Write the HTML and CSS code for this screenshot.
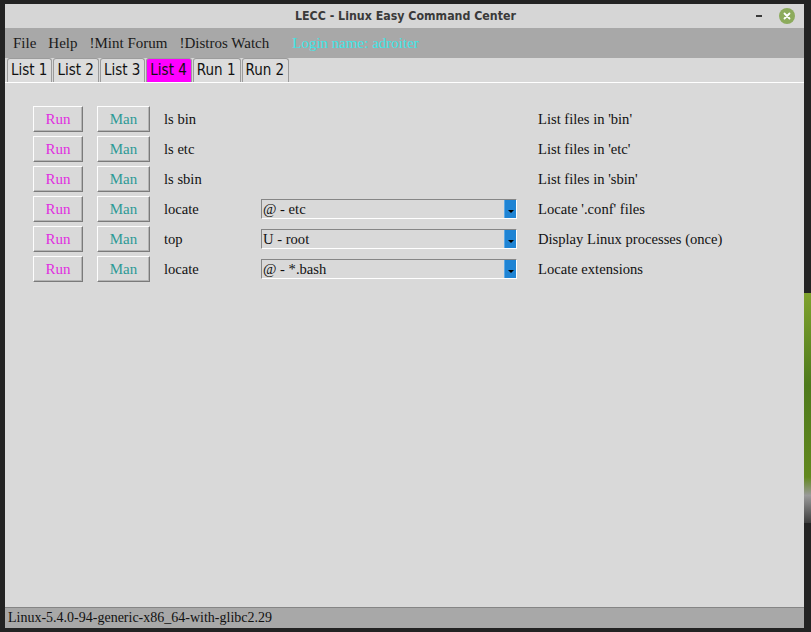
FILE: index.html
```html
<!DOCTYPE html>
<html>
<head>
<meta charset="utf-8">
<title>LECC</title>
<link rel="stylesheet" href="styles.css">
</head>
<body>
<div class="desk-green"></div>
<div class="window">
  <div class="titlebar">
    <span class="title">LECC - Linux Easy Command Center</span>
    <div class="wm-buttons">
      <span class="minimize"></span>
      <span class="close">
        <svg width="16" height="16" viewBox="0 0 16 16"><circle cx="8" cy="8" r="8" fill="#8cab5c"/><path d="M5.5 5.5 L10.5 10.5 M10.5 5.5 L5.5 10.5" stroke="#fff" stroke-width="1.8" stroke-linecap="round"/></svg>
      </span>
    </div>
  </div>
  <div class="menubar">
    <span class="menu-item">File</span>
    <span class="menu-item">Help</span>
    <span class="menu-item">!Mint Forum</span>
    <span class="menu-item">!Distros Watch</span>
    <span class="login">Login name: adroiter</span>
  </div>
  <div class="tabs">
    <span class="tab">List 1</span>
    <span class="tab">List 2</span>
    <span class="tab">List 3</span>
    <span class="tab active">List 4</span>
    <span class="tab">Run 1</span>
    <span class="tab">Run 2</span>
  </div>
  <div class="content">
    <div class="row">
      <button class="btn run">Run</button><button class="btn man">Man</button>
      <span class="cmd">ls bin</span><span class="nocombo"></span>
      <span class="desc">List files in 'bin'</span>
    </div>
    <div class="row">
      <button class="btn run">Run</button><button class="btn man">Man</button>
      <span class="cmd">ls etc</span><span class="nocombo"></span>
      <span class="desc">List files in 'etc'</span>
    </div>
    <div class="row">
      <button class="btn run">Run</button><button class="btn man">Man</button>
      <span class="cmd">ls sbin</span><span class="nocombo"></span>
      <span class="desc">List files in 'sbin'</span>
    </div>
    <div class="row">
      <button class="btn run">Run</button><button class="btn man">Man</button>
      <span class="cmd">locate</span>
      <span class="combo"><span class="combo-text">@ - etc</span><span class="combo-arrow"></span></span>
      <span class="desc">Locate '.conf' files</span>
    </div>
    <div class="row">
      <button class="btn run">Run</button><button class="btn man">Man</button>
      <span class="cmd">top</span>
      <span class="combo"><span class="combo-text">U - root</span><span class="combo-arrow"></span></span>
      <span class="desc">Display Linux processes (once)</span>
    </div>
    <div class="row">
      <button class="btn run">Run</button><button class="btn man">Man</button>
      <span class="cmd">locate</span>
      <span class="combo"><span class="combo-text">@ - *.bash</span><span class="combo-arrow"></span></span>
      <span class="desc">Locate extensions</span>
    </div>
  </div>
  <div class="statusbar">Linux-5.4.0-94-generic-x86_64-with-glibc2.29</div>
</div>
</body>
</html>
```
FILE: styles.css
```css
html, body {
  margin: 0;
  padding: 0;
}
body {
  width: 811px;
  height: 632px;
  overflow: hidden;
  background: #232323;
  padding: 4px 0 0 5px;
  box-sizing: border-box;
  position: relative;
}
.desk-green {
  position: absolute;
  right: 0;
  top: 293px;
  width: 7px;
  height: 230px;
  background: linear-gradient(180deg, #7fa22e 0%, #4e7a1c 40%, #62881e 80%, #9a9a9a 88%, #3d3d3d 100%);
}
.window {
  width: 799px;
  height: 624px;
  display: flex;
  flex-direction: column;
  background: #d9d9d9;
  position: relative;
}
.titlebar {
  height: 24px;
  background: #d6d6d6;
  display: flex;
  align-items: center;
  justify-content: center;
  position: relative;
  font-family: "DejaVu Sans Condensed", "DejaVu Sans", sans-serif;
  font-size: 12.3px;
  font-weight: bold;
  color: #3a3a3a;
}
.title {
  padding-left: 2px;
}
.wm-buttons {
  position: absolute;
  right: 9px;
  top: 4px;
  display: flex;
  align-items: center;
  gap: 17px;
}
.minimize {
  width: 6px;
  height: 2px;
  background: #3a3a3a;
}
.close {
  width: 16px;
  height: 16px;
  display: block;
}
.close svg {
  display: block;
}
.menubar {
  height: 30px;
  background: #a8a8a8;
  display: flex;
  align-items: center;
  padding-left: 8px;
  gap: 12px;
  font-family: "Liberation Serif", serif;
  font-size: 15px;
  color: #1a1a1a;
}
.login {
  color: #3ee6e6;
  margin-left: 11px;
}
.tabs {
  height: 25px;
  box-sizing: border-box;
  display: flex;
  align-items: flex-end;
  padding-left: 2px;
  border-bottom: 1px solid #ffffff;
  background: #d9d9d9;
}
.tab {
  height: 24px;
  box-sizing: border-box;
  padding: 0 4px 0 3px;
  border: 1px solid #9c9c9c;
  border-bottom: none;
  border-radius: 3px 3px 0 0;
  font-family: "DejaVu Sans Condensed", "DejaVu Sans", sans-serif;
  font-size: 15px;
  line-height: 23px;
  color: #111;
  background: #dcdcdc;
  margin-right: 1px;
}
.tab.active {
  background: #ff00ff;
}
.content {
  flex: 1;
  padding: 23px 0 0 28px;
  display: flex;
  flex-direction: column;
  gap: 4px;
  font-family: "Liberation Serif", serif;
  font-size: 14.6px;
  color: #111;
}
.row {
  display: flex;
  align-items: center;
  height: 26px;
}
.btn {
  height: 26px;
  box-sizing: border-box;
  border: 1px solid;
  border-color: #fdfdfd #7a7a7a #7a7a7a #fdfdfd;
  box-shadow: inset -1px -1px 0 #b4b4b4;
  background: #d9d9d9;
  font-family: "Liberation Serif", serif;
  font-size: 15px;
  padding: 0;
  margin: 0;
}
.btn.run {
  width: 50px;
  color: #e02ee0;
  margin-right: 14px;
}
.btn.man {
  width: 53px;
  color: #2d9a96;
  margin-right: 14px;
}
.cmd {
  width: 97px;
}
.nocombo {
  width: 256px;
}
.combo {
  width: 256px;
  height: 20px;
  box-sizing: border-box;
  border: 1px solid;
  border-color: #868686 #ffffff #ffffff #868686;
  display: flex;
  align-items: center;
  justify-content: space-between;
  background: #d9d9d9;
}
.combo-text {
  padding-left: 1px;
}
.combo-arrow {
  width: 12px;
  height: 18px;
  background: #1f84d4;
  position: relative;
  border-left: 1px solid #5aa8e6;
  box-sizing: border-box;
}
.combo-arrow::after {
  content: "";
  position: absolute;
  left: 3px;
  bottom: 5px;
  border-left: 3px solid transparent;
  border-right: 3px solid transparent;
  border-top: 3px solid #000;
}
.desc {
  margin-left: 21px;
}
.statusbar {
  height: 21px;
  box-sizing: border-box;
  border-top: 1px solid #858585;
  background: #a8a8a8;
  padding-left: 3px;
  font-family: "Liberation Serif", serif;
  font-size: 14px;
  line-height: 20px;
  color: #111;
}
```
